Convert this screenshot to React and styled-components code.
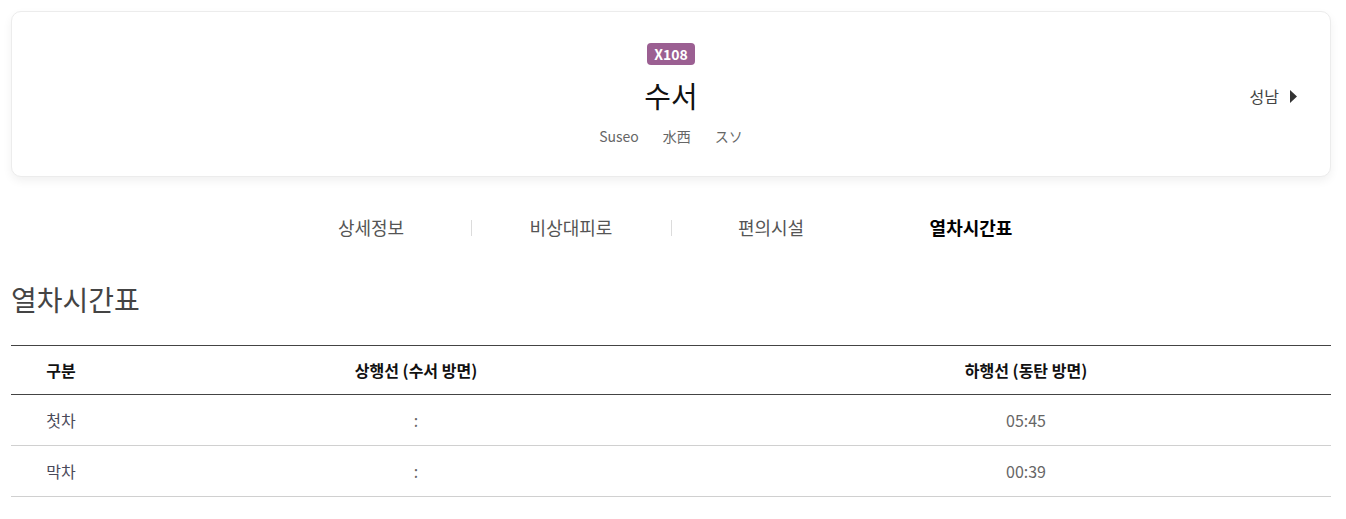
import React from "react";
import styled, { createGlobalStyle } from "styled-components";

const Global = createGlobalStyle`
  html, body { margin: 0; padding: 0; background: #fff; }
  body { font-family: "Noto Sans CJK KR", "Noto Sans", sans-serif; color: #222; }
  * { box-sizing: border-box; }
`;

const Page = styled.div`
  width: 1320px;
  margin: 11px 0 0 11px;
`;

const Card = styled.section`
  position: relative;
  height: 166px;
  border: 1px solid #ececec;
  border-radius: 10px;
  box-shadow: 0 4px 10px rgba(0, 0, 0, 0.06);
  background: #fff;
  display: flex;
  flex-direction: column;
  align-items: center;
  padding-top: 31px;
`;

const Badge = styled.span`
  display: inline-flex;
  align-items: center;
  justify-content: center;
  width: 48px;
  height: 22px;
  border-radius: 4px;
  background: #9b5f92;
  color: #fff;
  font-weight: 700;
  font-size: 14px;
  line-height: 1;
`;

const Title = styled.h1`
  margin: 10px 0 0;
  font-size: 29px;
  font-weight: 400;
  color: #111;
  line-height: 40px;
`;

const SubRow = styled.div`
  margin-top: 11px;
  display: flex;
  gap: 24px;
  align-items: baseline;
`;

const Sub = styled.span`
  font-size: ${(p) => p.$size || 14}px;
  color: ${(p) => p.$color || "#666"};
  line-height: 20px;
`;

const NextLink = styled.a`
  position: absolute;
  right: 33px;
  top: 72px;
  display: flex;
  align-items: center;
  gap: 11px;
  font-size: 16px;
  color: #444;
  text-decoration: none;
`;

const Tabs = styled.nav`
  margin: 30px auto 0;
  width: 800px;
  display: grid;
  grid-template-columns: repeat(4, 1fr);
`;

const Tab = styled.div`
  position: relative;
  text-align: center;
  font-size: 18px;
  line-height: 40px;
  font-weight: ${(p) => (p.$active ? 700 : 400)};
  color: ${(p) => (p.$active ? "#000" : "#555")};
  & + &::before {
    content: "";
    position: absolute;
    left: 0;
    top: 13px;
    height: 16px;
    width: 1px;
    background: #dcdcdc;
  }
`;

const Heading = styled.h2`
  margin: 32px 0 0;
  font-size: 28px;
  font-weight: 400;
  color: #444;
  line-height: 40px;
`;

const Table = styled.table`
  margin-top: 26px;
  width: 100%;
  border-collapse: collapse;
  table-layout: fixed;
  border-top: 1px solid #444;
`;

const Th = styled.th`
  height: 49px;
  font-size: 16px;
  font-weight: 700;
  color: #111;
  border-bottom: 1px solid #444;
  text-align: center;
`;

const Td = styled.td`
  height: 51px;
  color: ${(p) => (p.$time ? "#666" : "#4a4a5a")};
  font-size: 16px;
  border-bottom: 1px solid #d0d0d0;
  text-align: center;
`;

const Triangle = () => (
  <svg width="7" height="13" viewBox="0 0 7 13">
    <path d="M0 0 L7 6.5 L0 13 Z" fill="#333" />
  </svg>
);

export default function App() {
  const rows = [
    { label: "첫차", up: ":", down: "05:45" },
    { label: "막차", up: ":", down: "00:39" },
  ];
  return (
    <>
      <Global />
      <Page>
        <Card>
          <Badge>X108</Badge>
          <Title>수서</Title>
          <SubRow>
            <Sub $size={14}>Suseo</Sub>
            <Sub $size={14}>水西</Sub>
            <Sub $size={14}>スソ</Sub>
          </SubRow>
          <NextLink href="#">
            성남 <Triangle />
          </NextLink>
        </Card>
        <Tabs>
          <Tab>상세정보</Tab>
          <Tab>비상대피로</Tab>
          <Tab>편의시설</Tab>
          <Tab $active>열차시간표</Tab>
        </Tabs>
        <Heading>열차시간표</Heading>
        <Table>
          <colgroup>
            <col style={{ width: 100 }} />
            <col />
            <col />
          </colgroup>
          <thead>
            <tr>
              <Th>구분</Th>
              <Th>상행선 (수서 방면)</Th>
              <Th>하행선 (동탄 방면)</Th>
            </tr>
          </thead>
          <tbody>
            {rows.map((r) => (
              <tr key={r.label}>
                <Td>{r.label}</Td>
                <Td $time>{r.up}</Td>
                <Td $time>{r.down}</Td>
              </tr>
            ))}
          </tbody>
        </Table>
      </Page>
    </>
  );
}
